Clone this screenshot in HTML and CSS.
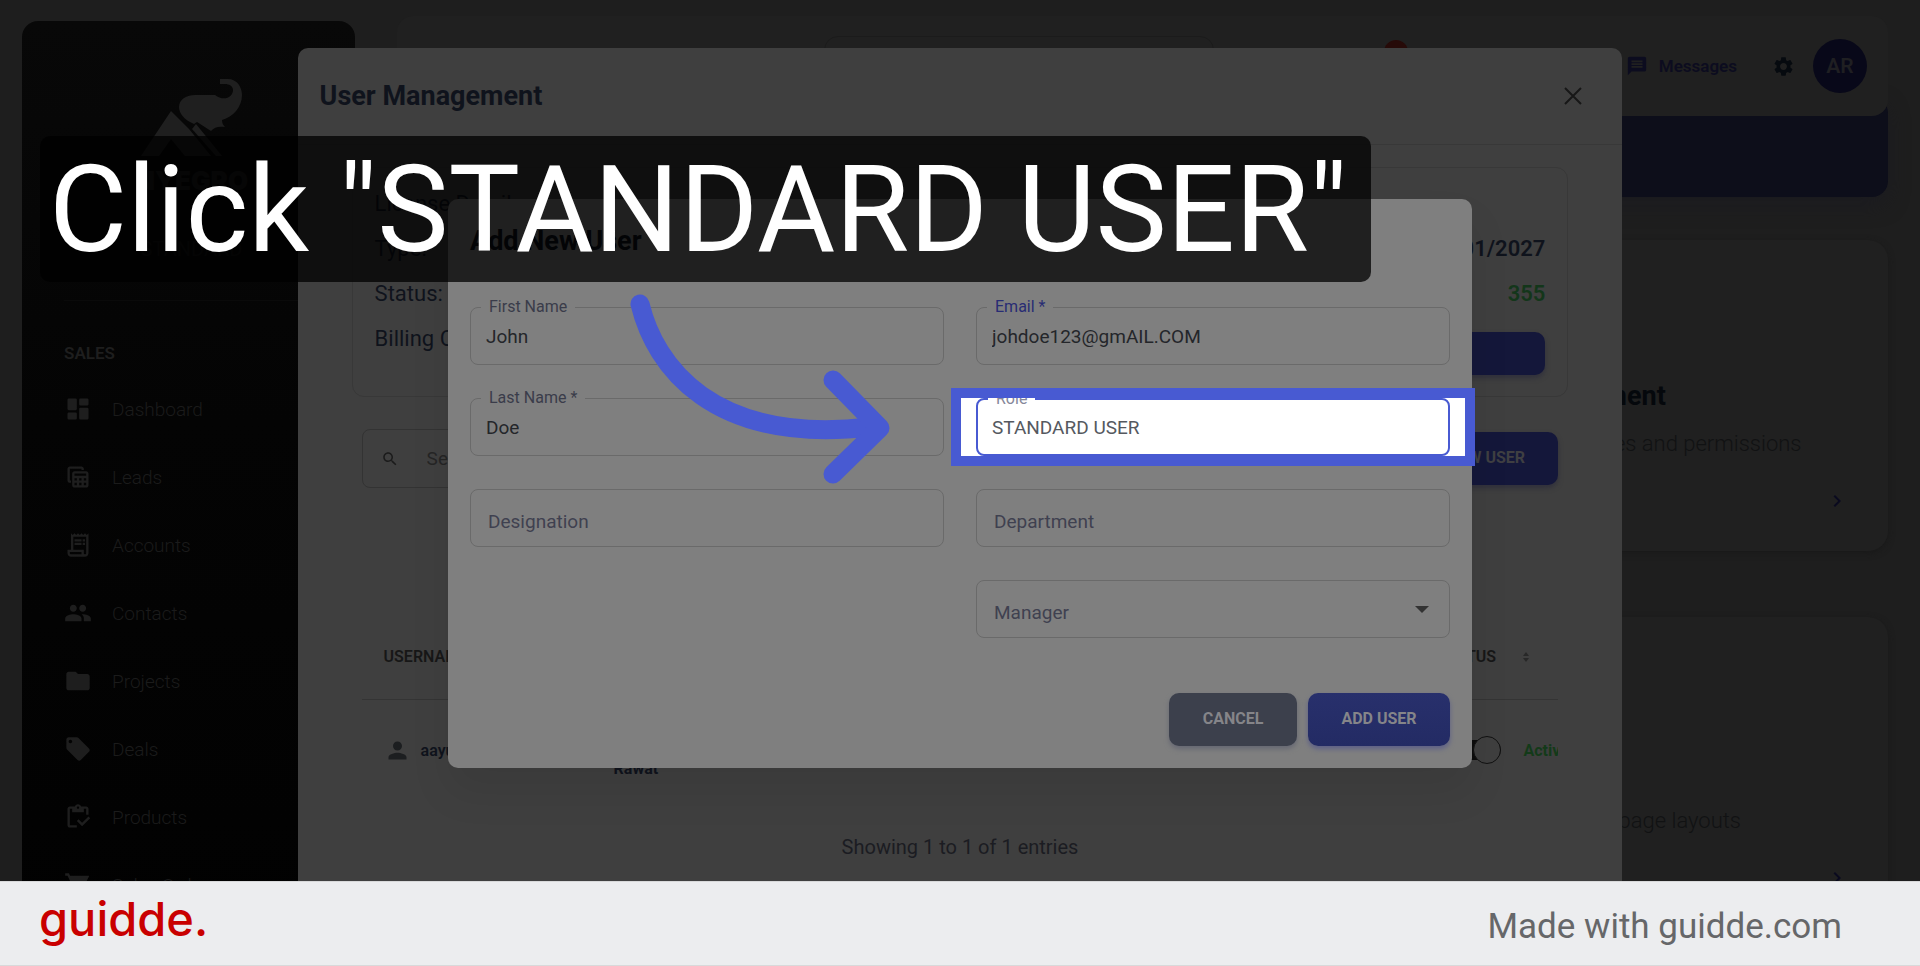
FILE: index.html
```html
<!DOCTYPE html>
<html lang="en">
<head>
<meta charset="utf-8">
<title>Click "STANDARD USER"</title>
<link rel="stylesheet" href="styles.css">
</head>
<body>
<main class="stage">
  <div class="app">
    <nav class="sidebar">
      <div class="brand">
        <svg class="brand-mark" viewBox="0 0 102 78" aria-hidden="true">
          <path d="M30 32 0 77h18l12-17 14 17h26L48 50z"/>
          <path d="M55 45 81 77h-6L51 50z"/>
          <path d="M38 28C38 20 46 16 54 16h20c9 7 18 2 18-5 0-4-4-6-8-6h-5V0h8c9 0 14 8 14 16 0 12-9 22-20 25 0 3 1 5 3 7-6-1-11 0-14 4l-14-9-3 2C43 41 38 34 38 28z"/>
        </svg>
        <span class="brand-name">NYEGRO</span>
        <span class="plan">STANDARD</span>
      </div>
      <h2 class="nav-title">SALES</h2>
      <ul class="nav-list">
        <li><a href="#"><svg viewBox="0 0 24 24"><path d="M4 3h6q1 0 1 1v8q0 1-1 1H4q-1 0-1-1V4q0-1 1-1zM14 3h6q1 0 1 1v4q0 1-1 1h-6q-1 0-1-1V4q0-1 1-1zM14 11h6q1 0 1 1v8q0 1-1 1h-6q-1 0-1-1v-8q0-1 1-1zM4 15h6q1 0 1 1v4q0 1-1 1H4q-1 0-1-1v-4q0-1 1-1z"/></svg>Dashboard</a></li>
        <li><a href="#"><svg viewBox="0 0 24 24"><path fill-rule="evenodd" d="M19 7H9c-1.100 0-2 .9-2 2v10c0 1.100.9 2 2 2h10c1.100 0 2-.9 2-2V9c0-1.100-.9-2-2-2zm0 2v2H9V9zm-6 6v-2h2v2zm2 2v2h-2v-2zm-4-2H9v-2h2zm6-2h2v2h-2zm-8 4h2v2H9zm8 2v-2h2v2zM6 17H5c-1.100 0-2-.9-2-2V5c0-1.100.9-2 2-2h10c1.100 0 2 .9 2 2v1h-2V5H5v10h1z"/></svg>Leads</a></li>
        <li><a href="#"><svg viewBox="0 0 24 24"><path fill-rule="evenodd" d="M19.500 3.500 18 2l-1.500 1.500L15 2l-1.500 1.500L12 2l-1.500 1.500L9 2 7.500 3.500 6 2v14H3v3c0 1.660 1.340 3 3 3h12c1.660 0 3-1.340 3-3V2zM15 20H6c-.55 0-1-.45-1-1v-1h10zm4-1c0 .55-.45 1-1 1s-1-.45-1-1v-3H8V5h11zM9 7h6v2H9zM16 7h2v2h-2zM9 10h6v2H9zM16 10h2v2h-2z"/></svg>Accounts</a></li>
        <li><a href="#"><svg viewBox="0 0 24 24"><path d="M16 11c1.660 0 2.990-1.340 2.990-3S17.660 5 16 5s-3 1.340-3 3 1.340 3 3 3zm-8 0c1.660 0 2.990-1.340 2.990-3S9.660 5 8 5 5 6.340 5 8s1.340 3 3 3zm0 2c-2.330 0-7 1.170-7 3.500V19h14v-2.500C15 14.170 10.330 13 8 13zm8 0c-.29 0-.62.02-.97.05 1.160.84 1.970 1.970 1.970 3.450V19h6v-2.500c0-2.330-4.670-3.500-7-3.500z"/></svg>Contacts</a></li>
        <li><a href="#"><svg viewBox="0 0 24 24"><path d="M10 4H4c-1.100 0-2 .9-2 2v12c0 1.100.9 2 2 2h16c1.100 0 2-.9 2-2V8c0-1.100-.9-2-2-2h-8z"/></svg>Projects</a></li>
        <li><a href="#"><svg viewBox="0 0 24 24"><path fill-rule="evenodd" d="m21.410 11.580-9-9C12.050 2.220 11.550 2 11 2H4c-1.100 0-2 .9-2 2v7c0 .55.22 1.050.59 1.420l9 9c.36.36.86.58 1.410.58s1.050-.22 1.410-.59l7-7c.37-.36.59-.86.59-1.410s-.23-1.060-.59-1.420zM5.500 7C4.670 7 4 6.330 4 5.500S4.670 4 5.500 4 7 4.670 7 5.500 6.330 7 5.500 7z"/></svg>Deals</a></li>
        <li><a href="#"><svg viewBox="0 0 24 24"><path fill-rule="evenodd" d="M5 5h2v3h10V5h2v5h2V5c0-1.100-.9-2-2-2h-4.180C14.400 1.840 13.300 1 12 1s-2.400.84-2.820 2H5c-1.100 0-2 .9-2 2v14c0 1.100.9 2 2 2h6v-2H5zm7-2c.55 0 1 .45 1 1s-.45 1-1 1-1-.45-1-1 .45-1 1-1z"/><path d="M21 11.500 15.510 17l-3.010-3-1.500 1.500 4.510 4.500L22.500 13z"/></svg>Products</a></li>
        <li><a href="#"><svg viewBox="0 0 24 24"><path d="M7 18a2 2 0 1 0 .01 0zM1 2v2h2l3.600 7.590-1.350 2.450C4.520 15.370 5.480 17 7 17h12v-2H7.420l1.130-2h7.450c.75 0 1.410-.41 1.750-1.030L21.700 4H5.210l-.94-2zM17 18a2 2 0 1 0 .01 0z"/></svg>Sales Orders</a></li>
      </ul>
    </nav>

    <div class="page">
      <header class="topbar">
        <input class="topbar-search" type="search" aria-label="Search">
        <span class="count"></span>
        <a class="messages" href="#">
          <svg viewBox="0 0 24 24"><path fill-rule="evenodd" d="M20 2H4c-1.100 0-2 .9-2 2v18l4-4h14c1.100 0 2-.9 2-2V4c0-1.100-.9-2-2-2zm-2 12H6v-2h12zm0-3H6V9h12zm0-3H6V6h12z"/></svg>
          Messages
        </a>
        <button class="gear" type="button" aria-label="Settings">
          <svg viewBox="0 0 24 24"><path fill-rule="evenodd" d="M19.140 12.940c.04-.3.06-.61.06-.94 0-.32-.02-.64-.07-.94l2.030-1.580c.18-.14.23-.41.12-.61l-1.920-3.320c-.12-.22-.37-.29-.59-.22l-2.390.96c-.5-.38-1.030-.7-1.620-.94l-.36-2.540c-.04-.24-.24-.41-.48-.41h-3.840c-.24 0-.43.17-.47.41l-.36 2.540c-.59.24-1.130.57-1.620.94l-2.390-.96c-.22-.08-.47 0-.59.22L2.740 8.870c-.12.21-.08.47.12.61l2.030 1.580c-.05.3-.09.63-.09.94s.02.64.07.94l-2.030 1.580c-.18.14-.23.41-.12.61l1.920 3.320c.12.22.37.29.59.22l2.390-.96c.5.38 1.030.7 1.620.94l.36 2.540c.05.24.24.41.48.41h3.840c.24 0 .44-.17.47-.41l.36-2.540c.59-.24 1.130-.56 1.620-.94l2.390.96c.22.08.47 0 .59-.22l1.920-3.320c.12-.22.07-.47-.12-.61zM12 15.600c-1.980 0-3.600-1.620-3.600-3.600s1.620-3.600 3.600-3.600 3.600 1.620 3.600 3.600-1.620 3.600-3.600 3.600z"/></svg>
        </button>
        <span class="avatar">AR</span>
      </header>
      <div class="banner"></div>
      <section class="tile">
        <div class="tile-text">
          <h3>User Management</h3>
          <p>Manage users, roles and permissions</p>
        </div>
        <svg class="chevron" viewBox="0 0 24 24"><path d="M10 6 8.590 7.410 13.170 12l-4.580 4.590L10 18l6-6z"/></svg>
      </section>
      <section class="tile">
        <div class="tile-text">
          <h3>Layouts</h3>
          <p>Customize record page layouts</p>
        </div>
        <svg class="chevron" viewBox="0 0 24 24"><path d="M10 6 8.590 7.410 13.170 12l-4.580 4.590L10 18l6-6z"/></svg>
      </section>
    </div>
  </div>

  <div class="overlay">
    <section class="modal" aria-label="User Management">
      <header class="modal-head">
        <h1>User Management</h1>
        <button class="close" type="button" aria-label="Close"><svg viewBox="0 0 18 18"><path d="m1 1 16 16M17 1 1 17"/></svg></button>
      </header>
      <div class="modal-body">
        <div class="license">
          <div class="license-col">
            <p>License Details</p>
            <p>Type:</p>
            <p>Status:</p>
            <p>Billing Cycle:</p>
          </div>
          <div class="license-col license-values">
            <p></p>
            <p>01/01/2027</p>
            <p class="green">355</p>
            <button class="license-button" type="button" aria-label="Manage license"></button>
          </div>
        </div>
        <div class="tools">
          <label class="search">
            <svg viewBox="0 0 24 24"><path d="M15.500 14h-.79l-.28-.27C15.410 12.590 16 11.110 16 9.500 16 5.910 13.090 3 9.500 3S3 5.910 3 9.500 5.910 16 9.500 16c1.610 0 3.090-.59 4.230-1.570l.27.28v.79l5 4.990L20.490 19zm-6 0C7.010 14 5 11.990 5 9.500S7.010 5 9.500 5 14 7.010 14 9.500 11.990 14 9.500 14z"/></svg>
            <input type="text" placeholder="Search" aria-label="Search users">
          </label>
          <button class="button new-user" type="button">ADD NEW USER</button>
        </div>
        <div class="table-wrap">
          <table class="users">
            <colgroup><col class="col-user"><col class="col-name"><col><col class="col-status"></colgroup>
            <thead><tr><th>USERNAME</th><th></th><th></th><th><span class="sort">STATUS <svg viewBox="0 0 6 10"><path d="M0 4 3 0l3 4zM0 6l3 4 3-4z"/></svg></span></th></tr></thead>
            <tbody><tr>
              <td><span class="user"><svg viewBox="0 0 24 24"><path d="M12 12c2.210 0 4-1.790 4-4s-1.790-4-4-4-4 1.790-4 4 1.790 4 4 4zm0 2c-2.670 0-8 1.340-8 4v2h16v-2c0-2.660-5.330-4-8-4z"/></svg>aayush</span></td>
              <td class="name">Aayush<br>Rawat</td>
              <td></td>
              <td><label class="status"><input type="checkbox" checked><span>Active</span></label></td>
            </tr></tbody>
          </table>
        </div>
        <p class="entries">Showing 1 to 1 of 1 entries</p>
      </div>
    </section>
  </div>

  <div class="overlay">
    <form class="dialog">
      <h2>Add New User</h2>
      <div class="fields">
        <div class="field"><label for="first">First Name</label><input id="first" type="text" value="John"></div>
        <div class="field active"><label for="email">Email *</label><input id="email" type="text" value="johdoe123@gmAIL.COM"></div>
        <div class="field"><label for="last">Last Name *</label><input id="last" type="text" value="Doe"></div>
        <div class="spotlight">
          <div class="field"><label for="role">Role</label><select id="role"><option>STANDARD USER</option></select></div>
        </div>
        <div class="field"><input type="text" placeholder="Designation" aria-label="Designation"></div>
        <div class="field"><input type="text" placeholder="Department" aria-label="Department"></div>
        <div class="field manager">
          <select class="empty" aria-label="Manager"><option>Manager</option></select>
          <svg viewBox="0 0 12 6"><path d="M0 0h12L6 6z"/></svg>
        </div>
      </div>
      <div class="actions">
        <button class="button cancel" type="button">CANCEL</button>
        <button class="button add" type="button">ADD USER</button>
      </div>
    </form>
  </div>

  <svg class="arrow" viewBox="0 0 262 200" aria-hidden="true">
    <path d="M16 19C31 81 88 160 246 142"/>
    <path d="m209 95 47 48-47 46"/>
  </svg>
  <p class="headline">Click "STANDARD USER"</p>
</main>
<footer class="footer">
  <span class="guidde">guidde.</span>
  <span class="made">Made with guidde.com</span>
</footer>
</body>
</html>
```

FILE: styles.css
```css
* { box-sizing: border-box; }
body {
  margin: 0;
  height: 100vh;
  display: grid;
  grid-template-rows: 1fr 85px;
  overflow: hidden;
  font-family: Roboto, "Liberation Sans", sans-serif;
  background: #1e1e1e;
}
h1, h2, h3, p, ul { margin: 0; padding: 0; }
ul { list-style: none; }
a { color: inherit; text-decoration: none; }
button, input, select { font: inherit; color: inherit; border: 0; background: none; padding: 0; margin: 0; }
svg { fill: currentColor; flex: none; }

.stage { position: relative; overflow: hidden; min-height: 0; }
.app { isolation: isolate; display: flex; gap: 42px; padding: 21px 32px 0 22px; height: 100%; }

/* Sidebar */
.sidebar {
  width: 333px;
  flex: none;
  height: 1000px;
  padding: 58px 0 0 42px;
  border-radius: 16px;
  background: linear-gradient(#080808, #040404 40%, #010101);
  color: #1b1b1b;
}
.brand { display: flex; flex-direction: column; align-items: center; height: 222px; margin-right: 36px; border-bottom: 1px solid #0a0a0a; }
.brand-mark { width: 102px; height: 78px; color: #1f1f1f; }
.brand-name { font: 900 26px/32px Inter, sans-serif; margin-top: 8px; }
.plan { font-size: 20px; line-height: 28px; margin-top: 38px; color: #111; }
.nav-title { font-size: 17px; line-height: 24px; font-weight: 600; margin: 40px 0 10px; color: #1e1e1e; }
.nav-list a { display: flex; align-items: center; gap: 20px; height: 68px; font-size: 19px; font-weight: 300; }
.nav-list svg { width: 28px; height: 28px; color: #1e1e1e; }

/* Page behind the dialogs */
.page { flex: 1; min-width: 0; margin-top: -5px; }
.topbar { position: relative; z-index: 1; display: flex; align-items: center; height: 100px; padding-right: 21px; border-radius: 16px; background: #202020; color: #0c0c1f; }
.topbar-search { width: 390px; height: 60px; margin: 0 170px 0 427px; border: 1px solid #1b1b1b; border-radius: 14px; }
.count { width: 24px; height: 24px; border-radius: 50%; background: #260a08; margin-bottom: 28px; }
.messages { display: flex; align-items: center; gap: 11px; margin-left: auto; font-size: 17px; font-weight: 600; }
.messages svg { width: 22px; height: 22px; }
.gear { display: flex; margin: 0 18px 0 35px; color: #060a0f; }
.gear svg { width: 23px; height: 23px; }
.avatar { width: 54px; height: 54px; border-radius: 50%; background: #080819; color: #1f1f22; font-size: 21px; font-weight: 600; line-height: 54px; text-align: center; }
.banner { height: 100px; margin: -19px 0 43px; border-radius: 16px; background: #0d0e1a; box-shadow: 0 8px 20px #1b1b20; }
.tile { display: flex; justify-content: space-between; align-items: flex-end; height: 311px; margin-bottom: 66px; padding: 0 39px 38px; border-radius: 20px; background: #202020; box-shadow: 0 2px 6px #191919; }
.tile-text { margin: 0 0 54px auto; width: 382px; white-space: nowrap; }
.tile h3 { font-size: 27px; line-height: 32px; color: #05080c; margin-bottom: 17px; }
.tile p { font-size: 22px; line-height: 30px; font-weight: 300; color: #111213; }
.chevron { width: 24px; height: 24px; color: #0a0a1f; }

/* Dialogs */
.overlay { position: absolute; inset: 0; display: flex; justify-content: center; align-items: flex-start; }
.modal { width: 69%; margin-top: 48px; min-height: 900px; border-radius: 10px; background: #3f3f3f; color: #0f131c; }
.modal-head { display: flex; align-items: center; justify-content: space-between; height: 97px; padding: 0 40px 0 22px; border-bottom: 1px solid #383838; }
.modal-head h1 { font-size: 27px; font-weight: 700; line-height: 32px; }
.close { display: flex; color: #171717; }
.close svg { width: 18px; height: 18px; stroke: currentColor; stroke-width: 2; }
.modal-body { padding: 22px 54px; }
.license { display: flex; justify-content: space-between; height: 230px; padding: 13px 22px; border: 1px solid #383838; border-radius: 12px; font-size: 22px; line-height: 45px; }
.license-values { display: flex; flex-direction: column; align-items: flex-end; font-weight: 600; }
.license-col p { height: 45px; }
.license-values .green { color: #13361a; }
.license-button { width: 300px; height: 43px; margin-top: 16px; border-radius: 10px; background: #14173a; box-shadow: 0 3px 5px #30303c; }
.tools { display: flex; align-items: center; justify-content: space-between; margin: 32px 10px 127px; }
.search { display: flex; align-items: center; gap: 28px; width: 420px; height: 59px; padding-left: 18px; border: 1px solid #333; border-radius: 8px; font-size: 19px; color: #1b1b1b; }
.search svg { width: 18px; height: 18px; }
.search input::placeholder { color: #252525; opacity: 1; }
.button { height: 53px; border-radius: 10px; font-size: 16px; font-weight: 700; text-align: center; padding-bottom: 3px; }
.new-user { width: 180px; background: #14173a; color: #3f3f42; box-shadow: 0 3px 5px #30303c; }
.table-wrap { margin: 0 10px; overflow: hidden; }
.users { width: 100%; table-layout: fixed; border-collapse: collapse; font-size: 16px; }
.users th, .users td { padding: 0; text-align: left; white-space: nowrap; }
.users th { height: 84px; font-weight: 600; color: #171717; border-bottom: 1px solid #343434; }
.users th:first-child { padding-left: 22px; }
.users td { height: 102px; }
.col-user { width: 252px; }
.col-name { width: 200px; }
.col-status { width: 121px; }
.sort { display: flex; align-items: center; gap: 27px; }
.sort svg { width: 6px; height: 10px; color: #282828; }
.user { display: flex; align-items: center; gap: 10px; padding-left: 22px; font-weight: 600; }
.user svg { width: 27px; height: 27px; color: #1c1e20; }
.users .name { font-weight: 700; line-height: 38px; }
.status { display: flex; align-items: center; gap: 22px; padding-left: 16px; font-weight: 700; color: #133a19; }
.status input { appearance: none; display: flex; flex: none; align-items: center; justify-content: flex-end; width: 48px; height: 20px; border-radius: 10px; background: #0c0c0c; }
.status input::after { content: ""; flex: none; width: 26px; height: 26px; border: 1px solid #111; border-radius: 50%; background: #3f3f3f; }
.entries { padding-top: 21px; text-align: center; font-size: 20px; line-height: 50px; color: #1b1c22; }

.dialog { width: 1024px; max-width: 90%; margin-top: 199px; padding: 26px 22px 22px; border-radius: 10px; background: #7f7f7f; box-shadow: 0 24px 40px rgba(0, 0, 0, .08); color: #24262a; }
.dialog h2 { font-size: 27px; line-height: 32px; font-weight: 700; color: #0c1018; margin-bottom: 50px; }
.fields { display: grid; grid-template-columns: 1fr 1fr; gap: 33px 32px; }
.field { position: relative; height: 58px; border: 1px solid #6a6a6a; border-radius: 8px; }
.field input, .field select { display: block; width: 100%; height: 100%; padding: 0 15px; appearance: none; font-size: 19px; outline: 0; }
.field label { position: absolute; top: -12px; left: 10px; padding: 0 8px; font-size: 16px; line-height: 22px; background: #7f7f7f; color: #3a3c4a; }
.field.active label { color: #282c74; }
.field input::placeholder { color: #3f4150; opacity: 1; }
.field input:placeholder-shown, .field select.empty { padding: 6px 17px 0; color: #3f4150; }
.manager { grid-column: 2; }
.manager svg { position: absolute; right: 20px; top: 25px; width: 14px; height: 7px; color: #333; }
.spotlight { position: relative; }
.spotlight::before { content: ""; position: absolute; inset: -1px -15px; background: #fff; }
.spotlight::after { content: ""; position: absolute; inset: -10px -25px; border: 10px solid #485ad2; pointer-events: none; }
.spotlight .field { border: 2px solid #485ad2; background: #fff; }
.spotlight label { background: #fff; color: #85879a; }
.spotlight select { padding: 0 14px; color: #55595f; }
.actions { display: flex; justify-content: flex-end; gap: 11px; margin-top: 55px; }
.actions .button { color: #858589; }
.cancel { width: 128px; background: #3c404c; box-shadow: 0 3px 5px #666873; }
.add { width: 142px; background: linear-gradient(#28306c, #232b64); box-shadow: 0 3px 5px #5d6088; }

/* Guide annotations */
.arrow { position: absolute; left: 624px; top: 285px; width: 262px; height: 200px; overflow: visible; fill: none; stroke: #485ad2; stroke-width: 19; stroke-linecap: round; stroke-linejoin: round; }
.headline { position: absolute; left: 40px; top: 136px; padding: 2px 24px 0 9px; border-radius: 10px; background: rgba(0, 0, 0, .75); color: #fff; font-size: 120px; line-height: 144px; white-space: nowrap; }

.footer { display: flex; align-items: center; justify-content: space-between; padding: 0 78px 0 39px; background: #ecedef; border-top: 1px solid #d8d9da; border-bottom: 1px solid #d8d9da; }
.guidde { font: 500 47px/60px Inter, sans-serif; color: #c90000; padding-bottom: 10px; }
.made { font-size: 35px; line-height: 48px; color: #666769; padding-top: 6px; }
```
